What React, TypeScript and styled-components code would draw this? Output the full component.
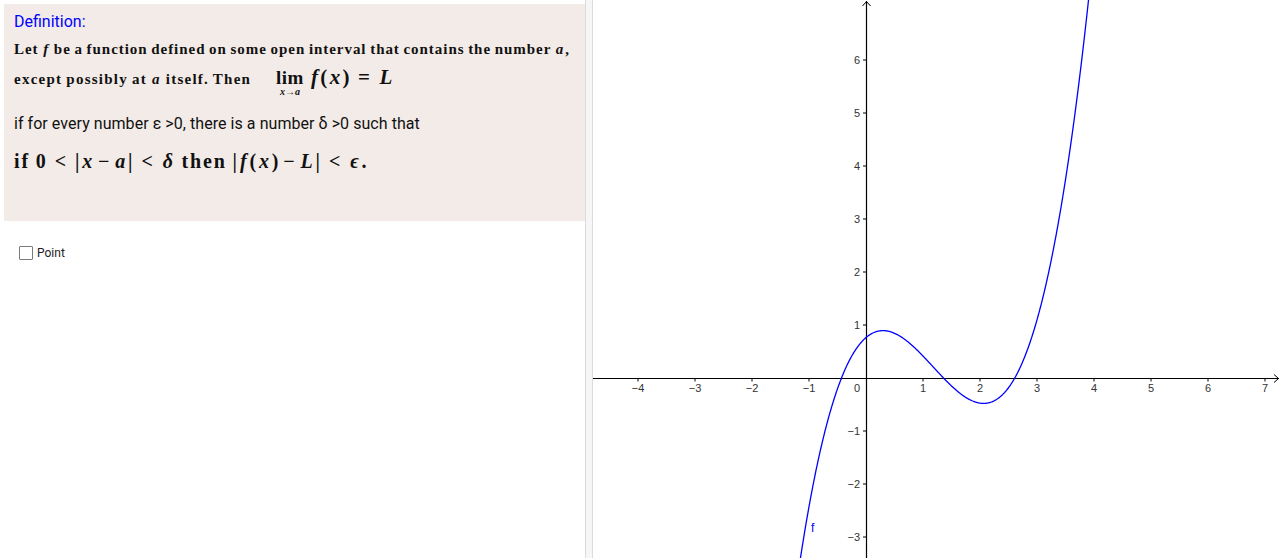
import React from "react";
import styled, { createGlobalStyle } from "styled-components";

const GlobalStyle = createGlobalStyle`
	html, body {
		margin: 0;
		padding: 0;
		background: #fff;
		overflow: hidden;
	}
	#root {
		height: 558px;
	}
`;

const Page = styled.div`
	display: flex;
	flex-direction: row;
	width: 1280px;
	height: 558px;
`;

const LeftColumn = styled.div`
	width: 585px;
	padding: 4px 0 0 4px;
	box-sizing: border-box;
	display: flex;
	flex-direction: column;
`;

const Panel = styled.div`
	height: 217px;
	background-color: #f3ebe7;
	padding: 10px 0 0 10px;
	box-sizing: border-box;
	color: #111;
`;

const Title = styled.div`
	font-family: Roboto, "Liberation Sans", sans-serif;
	font-size: 16px;
	color: #0000ff;
	line-height: 16px;
	height: 16px;
	margin-bottom: 9px;
`;

const SerifLine = styled.div<{ $size: number; $height: number; $top?: number; $spacing?: number }>`
	font-family: "Liberation Serif", serif;
	font-weight: bold;
	font-size: ${(p) => p.$size}px;
	line-height: ${(p) => p.$height}px;
	height: ${(p) => p.$height}px;
	margin-top: ${(p) => p.$top ?? 0}px;
	letter-spacing: ${(p) => p.$spacing ?? 0.95}px;
	word-spacing: -1px;
	white-space: nowrap;
`;

const Lead = styled.span`
	display: inline-block;
	width: 262px;
	letter-spacing: 1.25px;
`;

const Var = styled.i`
	font-style: italic;
	font-weight: bold;
	padding: 0 1px;
`;

const Rel = styled.span<{ $pad?: number }>`
	padding: 0 ${(p) => p.$pad ?? 7}px;
`;

const Bin = styled.span`
	padding: 0 3px;
`;

const Lim = styled.span`
	display: inline-flex;
	flex-direction: column;
	align-items: center;
	font-size: 19px;
	line-height: 18px;
	letter-spacing: 0.5px;
	margin-right: 6px;
`;

const LimSub = styled.span`
	font-size: 10px;
	line-height: 10px;
	font-style: italic;
	letter-spacing: 0;
`;

const MathText = styled.span`
	font-size: 21px;
	letter-spacing: 1.4px;
`;

const SansLine = styled.div`
	font-family: Roboto, "Liberation Sans", sans-serif;
	font-size: 16px;
	color: #111;
	letter-spacing: 0.05px;
	line-height: 20px;
	margin-top: 19px;
	height: 20px;
`;

const CheckRow = styled.label`
	display: flex;
	align-items: center;
	gap: 4px;
	margin: 25px 0 0 15px;
	font-family: Roboto, "Liberation Sans", sans-serif;
	font-size: 12px;
	color: #222;
`;

const Box = styled.span`
	width: 12px;
	height: 12px;
	border: 1px solid #7a7a7a;
	border-radius: 1px;
	background: #fff;
	display: inline-block;
`;

const Splitter = styled.div`
	width: 8px;
	height: 558px;
	box-sizing: border-box;
	border-left: 1px solid #dcdcdc;
	border-right: 1px solid #dcdcdc;
	background: #f6f6f6;
`;

const GraphView = styled.div`
	flex: 1;
	height: 558px;
	overflow: hidden;
`;

const W = 687;
const H = 558;
const OX = 273;
const OY = 378;
const UX = 57;
const UY = 53;

const f = (x: number) => 0.5 * (x + 0.43) * (x - 1.36) * (x - 2.61);

const curvePath = () => {
	const pts: string[] = [];
	for (let x = -1.3; x <= 4.0; x += 0.01) {
		const px = OX + x * UX;
		const py = OY - f(x) * UY;
		pts.push(`${pts.length ? "L" : "M"}${px.toFixed(2)},${py.toFixed(2)}`);
	}
	return pts.join(" ");
};

const labelStyle = {
	fontFamily: '"Liberation Sans", sans-serif',
	fontSize: 11,
	fill: "#333",
};

const Graph = () => {
	const xs = [-4, -3, -2, -1, 1, 2, 3, 4, 5, 6, 7];
	const ys = [-3, -2, -1, 1, 2, 3, 4, 5, 6];
	return (
		<svg width={W} height={H} viewBox={`0 0 ${W} ${H}`}>
			<line x1={0} y1={OY + 0.5} x2={W - 1} y2={OY + 0.5} stroke="#000" strokeWidth={1.2} />
			<path d={`M${W - 6},${OY - 3.5} L${W - 1.5},${OY + 0.5} L${W - 6},${OY + 4.5}`} fill="none" stroke="#000" strokeWidth={1} />
			<line x1={OX + 0.5} y1={1} x2={OX + 0.5} y2={H} stroke="#000" strokeWidth={1.2} />
			<path d={`M${OX - 3.5},6 L${OX + 0.5},1.5 L${OX + 4.5},6`} fill="none" stroke="#000" strokeWidth={1} />
			{xs.map((v) => {
				const px = OX + v * UX;
				return (
					<g key={`x${v}`}>
						<line x1={px} y1={OY} x2={px} y2={OY + 3.5} stroke="#000" strokeWidth={1} />
						<text x={px} y={OY + 14} textAnchor="middle" style={labelStyle}>
							{v < 0 ? `\u2212${-v}` : v}
						</text>
					</g>
				);
			})}
			{ys.map((v) => {
				const py = OY - v * UY;
				return (
					<g key={`y${v}`}>
						<line x1={OX - 3} y1={py} x2={OX} y2={py} stroke="#000" strokeWidth={1} />
						<text x={OX - 6} y={py + 4} textAnchor="end" style={labelStyle}>
							{v < 0 ? `\u2212${-v}` : v}
						</text>
					</g>
				);
			})}
			<text x={OX - 6} y={OY + 14} textAnchor="end" style={labelStyle}>
				0
			</text>
			<path d={curvePath()} fill="none" stroke="#0000ff" strokeWidth={1.3} />
			<text x={218} y={532} style={{ fontFamily: '"Liberation Sans", sans-serif', fontSize: 12, fill: "#0000ff" }}>
				f
			</text>
		</svg>
	);
};

export default function App() {
	return (
		<>
			<GlobalStyle />
			<Page>
				<LeftColumn>
					<Panel>
						<Title>Definition:</Title>
						<SerifLine $size={15} $height={20}>
							Let <Var>f</Var> be a function defined on some open interval that contains the number <Var>a</Var>,
						</SerifLine>
						<SerifLine $size={15} $height={36}>
							<Lead>
								except possibly at <Var>a</Var> itself. Then
							</Lead>
							<Lim>
								lim
								<LimSub>x→a</LimSub>
							</Lim>
							<MathText>
								<Var>f</Var>(<Var>x</Var>)<Rel $pad={7}>=</Rel>
								<Var>L</Var>
							</MathText>
						</SerifLine>
						<SansLine>if for every number ε &gt;0, there is a number δ &gt;0 such that</SansLine>
						<SerifLine $size={20} $height={34} $top={10} $spacing={1.85}>
							if 0<Rel>&lt;</Rel>|<Var>x</Var>
							<Bin>−</Bin>
							<Var>a</Var>|<Rel>&lt;</Rel>
							<Var>δ</Var> then |<Var>f</Var>(<Var>x</Var>)<Bin>−</Bin>
							<Var>L</Var>|<Rel>&lt;</Rel>
							<Var>ϵ</Var>.
						</SerifLine>
					</Panel>
					<CheckRow>
						<Box />
						Point
					</CheckRow>
				</LeftColumn>
				<Splitter />
				<GraphView>
					<Graph />
				</GraphView>
			</Page>
		</>
	);
}
